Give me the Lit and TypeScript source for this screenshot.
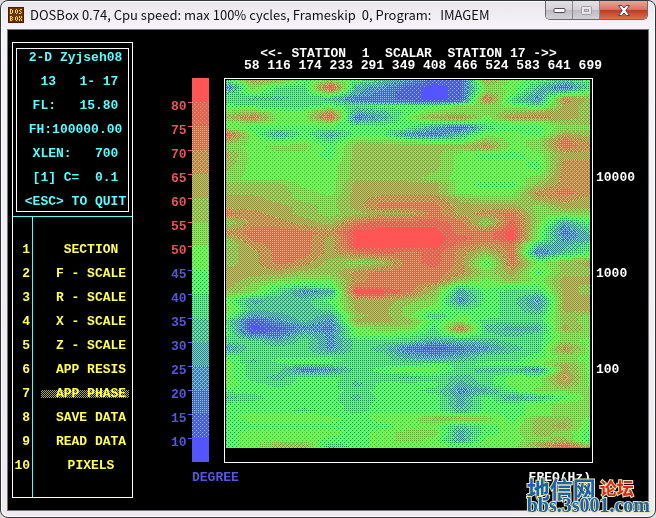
import { LitElement, html, css, svg } from "lit";
import { customElement, state } from "lit/decorators.js";
import { classMap } from "lit/directives/class-map.js";

type Rgb = [number, number, number];

const BLUE: Rgb = [85, 85, 255];
const GREEN: Rgb = [85, 255, 85];
const RED: Rgb = [255, 85, 85];

// Phase bands at each station, from the highest frequency to the lowest.
// Each hex digit is one 5 degree band: 0 is below 10, F is above 80.
const SECTION: [number, string][] = [
  [0, "6BA7975311B8757"],
  [7, "2966F4310198526"],
  [12, "5866A42101A8468"],
  [18, "6556522101D63CA"],
  [21, "6666632212C64CA"],
  [25, "7666767779986BA"],
  [32, "9A88C457999ABBA"],
  [37, "AD88E248BC8CCBA"],
  [42, "8988956777788AA"],
  [47, "877777774167799"],
  [54, "E847477325887BA"],
  [60, "B878699877A89DB"],
  [66, "98997AAAAAC89DC"],
  [74, "B8887AAAA8778BB"],
  [86, "A8888AAAA8887CC"],
  [98, "98888AAA98889CC"],
  [104, "AAA88BBBB877ACC"],
  [112, "AAA98BBBB888CDC"],
  [118, "BBA99BCCCA99BCB"],
  [126, "BBBA9BDDDBBB9BB"],
  [133, "DCBA9ABBDBCD999"],
  [142, "9CCBADEEED9E947"],
  [152, "CDDDCFFFFDDF825"],
  [158, "ADDDBFFFFEDF834"],
  [164, "9CDDBFFFFDCD546"],
  [172, "ABDDBDEDECAD257"],
  [182, "ABDCA9ADEC7D8AB"],
  [192, "BBBAACDDDC9B7AA"],
  [200, "BA988CDDDA8A8BB"],
  [206, "B9767DDDB6877BA"],
  [211, "A9634FFDA4766BA"],
  [220, "84557BBA93763BB"],
  [228, "95556BB986764BB"],
  [236, "83454AB958766A9"],
  [240, "61353BBA78666A9"],
  [248, "701328996D544B9"],
  [254, "722538876865699"],
  [260, "664636664556698"],
  [268, "3666365212356C8"],
  [276, "766666643466798"],
  [280, "857776655566898"],
  [284, "8666666676778B8"],
  [289, "8662367986553B8"],
  [297, "8657766565688C8"],
  [304, "8767757774688B8"],
  [310, "777776776347999"],
  [317, "567775777474579"],
  [324, "777776777477899"],
  [331, "777676777577899"],
  [334, "788877888887899"],
  [338, "78888788AA97AA8"],
  [346, "777777788578AB7"],
  [352, "788887899478A97"],
  [360, "7888778984889A6"],
  [364, "78AA67888788BD9"],
  [368, "78AA57888778AFC"],
];

const luma = ([r, g, b]: Rgb) => 0.299 * r + 0.587 * g + 0.114 * b;

// Ordered 4x4 threshold, in eighths.
const isDot = (x: number, y: number, eighths: number) => {
  if (eighths <= 0) return false;
  const even = x % 2 === 0 && y % 2 === 0;
  const odd = x % 2 === 1 && y % 2 === 1;
  const diagonal = (x >> 1) % 2 === (y >> 1) % 2;
  const rank = even ? (diagonal ? 0 : 1) : odd ? (diagonal ? 2 : 3) : 9;
  return rank < eighths;
};

// Colour of one screen pixel of a band: the chroma of the two inks is shared,
// their brightness is not.
const ink = (band: number, x: number, y: number): Rgb => {
  const other = band >= 8 ? RED : BLUE;
  const share = band >= 8 ? band - 7 : 8 - band;
  const part = band === 15 || band === 0 ? 8 : share;
  const dot = part <= 4 ? isDot(x, y, part) : !isDot(x, y, 8 - part);
  const mix = GREEN.map((g, i) => g + ((other[i] - g) * part) / 8) as Rgb;
  const own = dot ? other : GREEN;
  const shift = luma(own) - luma(mix);
  return mix.map((c) => Math.max(0, Math.min(255, c + shift))) as Rgb;
};

const paint = (canvas: HTMLCanvasElement, bandAt: (x: number, y: number, w: number, h: number) => number) => {
  const w = (canvas.width = canvas.clientWidth);
  const h = (canvas.height = canvas.clientHeight);
  const ctx = canvas.getContext("2d");
  if (!ctx || !w || !h) return;
  const image = ctx.createImageData(w, h);
  for (let y = 0; y < h; y++) {
    for (let x = 0; x < w; x++) {
      const [r, g, b] = ink(bandAt(x, y, w, h), x, y);
      image.data.set([r, g, b, 255], (y * w + x) * 4);
    }
  }
  ctx.putImageData(image, 0, 0);
};

const scaleBand = (_x: number, y: number, _w: number, h: number) => 15 - Math.min(15, Math.floor((y * 16) / h));

const sectionBand = (x: number, y: number, w: number, h: number) => {
  const depth = (y * 368) / h;
  let row = 0;
  while (row < SECTION.length - 2 && SECTION[row + 1][0] <= depth) row++;
  const [y0, upper] = SECTION[row];
  const [y1, lower] = SECTION[row + 1];
  const fx = (x * 14) / w;
  const col = Math.min(13, Math.floor(fx));
  const at = (s: string, i: number) => parseInt(s[i], 16);
  const across = (s: string) => at(s, col) + (at(s, col + 1) - at(s, col)) * (fx - col);
  const t = (depth - y0) / (y1 - y0);
  return Math.round(across(upper) * (1 - t) + across(lower) * t);
};

@customElement("app-root")
export class AppRoot extends LitElement {
  static styles = css`
    :host {
      display: block;
      --cyan: #55ffff;
      --yellow: #ffff55;
      --red: #e85555;
      --blue: #5555e0;
    }
    * { box-sizing: border-box; }
    button { font: inherit; color: inherit; background: none; border: 0; padding: 0; margin: 0; }
    .window {
      position: relative;
      min-height: 100vh;
      padding: 0 7px 6px;
      border: 1px solid #34363c;
      border-radius: 8px;
      background: linear-gradient(#e9e6eb, #f6f3f8 24px, #efeaf0);
      box-shadow: inset 0 0 0 1px #ffffff;
    }
    .backdrop { position: fixed; inset: 0; background: #dcdcdc; z-index: -1; }
    .titlebar { display: flex; align-items: flex-start; height: 29px; }
    .logo { width: 16px; height: 16px; margin-top: 6px; }
    .title {
      flex: 1;
      margin: 0 0 0 6px;
      font: 13px/28px "Noto Sans CJK SC", "Open Sans", sans-serif;
      color: #101014;
      white-space: pre;
      overflow: hidden;
    }
    .controls {
      display: flex;
      height: 19px;
      border: 1px solid #6d6a72;
      border-top: 0;
      border-radius: 0 0 5px 5px;
      overflow: hidden;
    }
    .control {
      display: grid;
      place-items: center;
      width: 27px;
      background: linear-gradient(#e4e1e5, #d3d0d5 50%, #bdbac1 50%, #d6d3d8);
      border-right: 1px solid #8a878e;
    }
    .control.close { width: 47px; border: 0; background: linear-gradient(#e8a697, #d8715f 50%, #bd3a22 50%, #d9704e); }
    .screen {
      display: flex;
      padding: 12px 0 12px 4px;
      background: #000;
      color: #fff;
      font: bold 13px/16px "Liberation Mono", monospace;
      box-shadow: 0 0 0 1px #77757b;
    }
    .panel { width: 121px; border: 1px solid #fff; display: flex; flex-direction: column; }
    .status {
      margin: 5px 3px 4px;
      padding: 1px 0 1px 6px;
      border: 1px solid #fff;
      display: flex;
      flex-direction: column;
      align-items: center;
      gap: 8px;
      color: var(--cyan);
      white-space: pre;
    }
    .line { margin: 0; }
    .menu {
      flex: 1;
      margin: 0;
      padding: 21px 0 19px;
      list-style: none;
      color: var(--yellow);
      border-top: 1px solid var(--cyan);
      background: linear-gradient(var(--cyan), var(--cyan)) 19px 0 / 1px 100% no-repeat;
    }
    .item { display: flex; align-items: center; width: 100%; height: 24px; white-space: pre; }
    .number { width: 17px; text-align: right; }
    .label { flex: 1; margin-left: 11px; margin-right: 3px; padding-left: 12px; line-height: 8px; height: 8px; text-align: center; }
    .label.active { background: repeating-conic-gradient(#a8a844 0 25%, #000 0 50%) 0 0 / 2px 2px; }
    .chart {
      flex: 1;
      min-width: 0;
      margin-left: 38px;
      display: grid;
      grid-template-columns: 21px 17px 15px minmax(0, 1fr) 55px;
      grid-template-rows: 36px auto auto;
      align-content: start;
    }
    .stations { grid-column: 4; padding-top: 6px; line-height: 12px; text-align: center; }
    .heading { margin: 0; font: inherit; white-space: pre; }
    .distances { display: flex; justify-content: space-between; margin: 0 -9px 0 20px; }
    .degrees { grid-column: 1; padding-top: 24px; line-height: 10px; }
    .degree { display: flex; justify-content: space-between; height: 24px; color: var(--red); }
    .degree::after { content: ""; width: 4px; height: 1px; background: currentColor; }
    .degree.cold { color: var(--blue); }
    .bar { grid-column: 2; width: 100%; height: 384px; display: block; }
    .plot { grid-column: 4; padding: 1px 2px 14px 1px; border: 1px solid #fff; }
    .section { display: block; width: 100%; height: 368px; }
    .frequencies { grid-column: 5; padding: 92px 0 0 3px; height: 384px; }
    .frequency { height: 96px; }
    .captions { grid-column: 2 / 5; display: flex; justify-content: space-between; padding: 7px 2px 0 0; }
    .unit { color: var(--blue); }
    .site {
      position: absolute;
      right: 5px;
      bottom: 4px;
      display: grid;
      text-decoration: none;
      color: #1a62a8;
      -webkit-text-stroke: 2px #e9e6b4;
      paint-order: stroke fill;
      font: bold 20px/16px "Liberation Serif", serif;
    }
    .name { font: bold 23px/18px "Noto Sans CJK SC", sans-serif; display: flex; align-items: center; gap: 4px; }
    .forum { font: bold 17px/18px "Noto Sans CJK SC", sans-serif; color: #d62a1c; }
  `;

  @state() private active = 7;

  private observer?: ResizeObserver;

  private readonly entries = [
    "SECTION", "F - SCALE", "R - SCALE", "X - SCALE", "Z - SCALE",
    "APP RESIS", "APP PHASE", "SAVE DATA", "READ DATA", "PIXELS",
  ];

  firstUpdated() {
    const draw = () => {
      const find = (s: string) => this.renderRoot.querySelector(s) as HTMLCanvasElement;
      paint(find(".bar"), scaleBand);
      paint(find(".section"), sectionBand);
    };
    draw();
    this.observer = new ResizeObserver(draw);
    this.observer.observe(this);
  }

  disconnectedCallback() {
    super.disconnectedCallback();
    this.observer?.disconnect();
  }

  private logo() {
    return html`<svg class="logo" viewBox="0 0 16 16" aria-hidden="true" shape-rendering="crispEdges">
      <rect width="16" height="16" fill="#4a1c08" />
      <rect x="1" y="1" width="14" height="14" fill="#6b3410" />
      ${svg`<g fill="none" stroke="#f4d848">
        <path d="M2.5 2v5M3 2.5h1M3 6.5h1M4.5 3v3M7.5 3v3M8 2.5h1M8 6.5h1M9.5 3v3M12 2.5h2M11.5 3v1M12 4.5h1M13.5 5v1M11 6.5h2" />
        <path d="M2.5 9v5M3 9.5h1M3 11.5h1M3 13.5h1M4.5 10v1M4.5 12v1M7.5 10v3M8 9.5h1M8 13.5h1M9.5 10v3M11.5 9v2M13.5 9v2M12 11.5h1M11.5 12v2M13.5 12v2" />
      </g>`}
    </svg>`;
  }

  render() {
    const degrees = Array.from({ length: 15 }, (_, i) => 80 - i * 5);
    return html`
      <div class="backdrop"></div>
      <div class="window">
        <header class="titlebar">
          ${this.logo()}
          <h1 class="title">DOSBox 0.74, Cpu speed: max 100% cycles, Frameskip  0, Program:   IMAGEM</h1>
          <div class="controls">
            <button class="control" aria-label="Minimize">
              <svg width="13" height="7"><rect x="1" y="1.5" width="11" height="4" rx="1" fill="#fff" stroke="#4b4b55" /></svg>
            </button>
            <button class="control" aria-label="Maximize" disabled>
              <svg width="13" height="11"><rect x="1.5" y="1.5" width="10" height="8" rx="1" fill="#e6e4e8" stroke="#a19ea6" /><rect x="4.5" y="4.5" width="4" height="2" fill="#d0cdd2" stroke="#a19ea6" /></svg>
            </button>
            <button class="control close" aria-label="Close">
              <svg width="12" height="11" viewBox="0 0 12 11"><path d="M.5.5H4L6 3 8 .5h3.5l-3.7 5 3.7 5H8L6 8l-2 2.5H.5l3.7-5z" fill="#fff" stroke="#5d4350" /></svg>
            </button>
          </div>
        </header>
        <main class="screen">
          <aside class="panel">
            <div class="status">
              ${["2-D Zyjseh08", " 13   1- 17", "FL:   15.80", "FH:100000.00", "XLEN:   700", "[1] C=  0.1", "<ESC> TO QUIT"].map(
                (line) => html`<p class="line">${line}</p>`
              )}
            </div>
            <ul class="menu">
              ${this.entries.map(
                (label, i) => html`<li>
                  <button class="item" @click=${() => (this.active = i + 1)}>
                    <span class="number">${i + 1}</span>
                    <span class=${classMap({ label: true, active: this.active === i + 1 })}>${label}</span>
                  </button>
                </li>`
              )}
            </ul>
          </aside>
          <section class="chart">
            <div class="stations">
              <h2 class="heading">${"<<- STATION  1  SCALAR  STATION 17 ->>"}</h2>
              <div class="distances">
                ${[58, 116, 174, 233, 291, 349, 408, 466, 524, 583, 641, 699].map((d) => html`<span>${d}</span>`)}
              </div>
            </div>
            <div class="degrees">
              ${degrees.map((d) => html`<div class=${classMap({ degree: true, cold: d < 50 })}>${d}</div>`)}
            </div>
            <canvas class="bar"></canvas>
            <div class="plot"><canvas class="section"></canvas></div>
            <div class="frequencies">
              ${[10000, 1000, 100].map((f) => html`<div class="frequency">${f}</div>`)}
            </div>
            <div class="captions"><span class="unit">DEGREE</span><span>FREQ(Hz)</span></div>
          </section>
        </main>
        <a class="site" href="#">
          <span class="name">地信网<span class="forum">论坛</span></span>
          <span>bbs.3s001.com</span>
        </a>
      </div>
    `;
  }
}
